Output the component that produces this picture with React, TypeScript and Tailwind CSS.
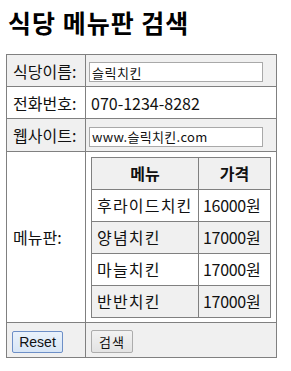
import React from "react";

const menu = [
  { name: "후라이드치킨", price: "16000원" },
  { name: "양념치킨", price: "17000원" },
  { name: "마늘치킨", price: "17000원" },
  { name: "반반치킨", price: "17000원" },
];

export default function App() {
  return (
    <div className="w-[291px] h-[371px] bg-white pl-[6px] pt-[6px] font-['Noto_Sans_CJK_KR','Noto_Sans',sans-serif] text-black">
      <h1 className="h-[48px] pl-[2px] text-[25px] leading-[32px] font-bold tracking-[1px]">식당 메뉴판 검색</h1>
      <table className="w-[271px] border-collapse border border-[#808080] text-[16px] text-[#111]">
        <tbody>
          <tr className="h-[32px] bg-[#f0f0f0]">
            <td className="w-[79px] border border-[#808080] px-[6px]">식당이름:</td>
            <td className="border border-[#808080] px-[3px]">
              <input
                defaultValue="슬릭치킨"
                className="w-[174px] h-[20px] border border-[#a9a9a9] bg-white px-[2px] text-[13px] leading-[18px] tracking-[0.5px] outline-none"
              />
            </td>
          </tr>
          <tr className="h-[32px] bg-white">
            <td className="border border-[#808080] px-[6px]">전화번호:</td>
            <td className="border border-[#808080] px-[5px]">070-1234-8282</td>
          </tr>
          <tr className="h-[33px] bg-[#f0f0f0]">
            <td className="border border-[#808080] px-[6px]">웹사이트:</td>
            <td className="border border-[#808080] px-[3px]">
              <input
                defaultValue="www.슬릭치킨.com"
                className="w-[174px] h-[20px] border border-[#a9a9a9] bg-white px-[2px] text-[13px] leading-[18px] tracking-[0.3px] outline-none"
              />
            </td>
          </tr>
          <tr className="h-[171px] bg-white">
            <td className="border border-[#808080] px-[6px]">메뉴판:</td>
            <td className="border border-[#808080] px-[5px] py-[4px]">
              <table className="w-[180px] border-collapse border border-[#808080]">
                <tbody>
                  <tr className="h-[32px] bg-[#f0f0f0]">
                    <th className="w-[107px] border border-[#808080] font-bold text-center">메뉴</th>
                    <th className="border border-[#808080] font-bold text-center">가격</th>
                  </tr>
                  {menu.map((m, i) => (
                    <tr key={m.name} className={`h-[32px] ${i % 2 === 0 ? "bg-white" : "bg-[#f0f0f0]"}`}>
                      <td className="border border-[#808080] px-[5px] tracking-[1.2px]">{m.name}</td>
                      <td className="border border-[#808080] px-[4px] tracking-[-0.3px]">{m.price}</td>
                    </tr>
                  ))}
                </tbody>
              </table>
            </td>
          </tr>
          <tr className="h-[35px] bg-[#f0f0f0]">
            <td className="border border-[#808080] px-[5px]">
              <button className="w-[51px] h-[22px] rounded-[2px] border border-[#6d8fc7] bg-gradient-to-b from-[#eaf2fb] to-[#d8e6f6] text-[14px] leading-none font-['Liberation_Sans',sans-serif]">
                Reset
              </button>
            </td>
            <td className="border border-[#808080] px-[5px]">
              <button className="w-[42px] h-[23px] rounded-[2px] border border-[#acacac] bg-gradient-to-b from-[#f2f2f2] to-[#e3e3e3] text-[13px] leading-none tracking-[1px]">
                검색
              </button>
            </td>
          </tr>
        </tbody>
      </table>
    </div>
  );
}
